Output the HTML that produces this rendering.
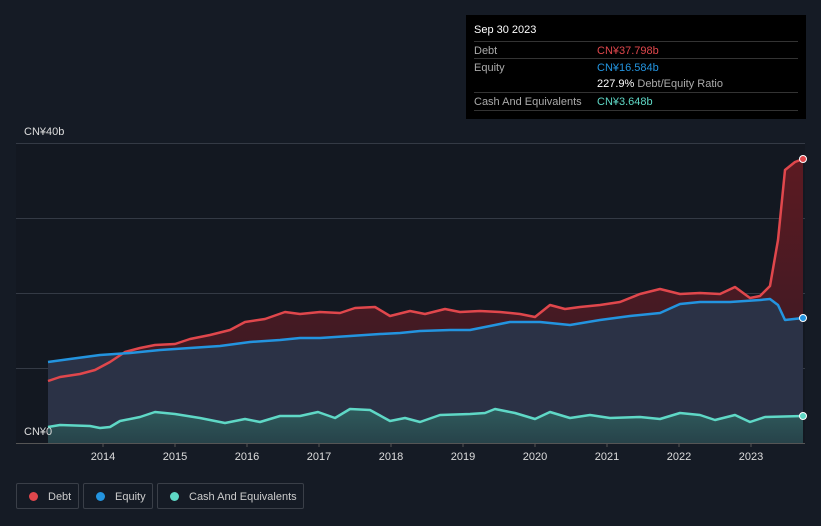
<!DOCTYPE html><html><head><style>
body{margin:0;width:821px;height:526px;background:#151b25;font-family:"Liberation Sans",sans-serif;overflow:hidden;position:relative}
.tt{position:absolute;left:466px;top:15px;width:340px;height:104px;background:#000;color:#fff;font-size:11px}
.row{position:absolute;left:8px;width:324px;height:17px;border-top:1px solid #333;}
.row span{position:absolute;top:3px}
.lg{position:absolute;top:483px;height:26px;border:1px solid #3a3f48;border-radius:2px;color:#ccc;font-size:11px;line-height:26px;box-sizing:border-box}
.lg i{display:inline-block;width:9px;height:9px;border-radius:50%;margin:0 10px 0 12px;vertical-align:-1px}
</style></head><body>
<svg width="821" height="526" style="position:absolute;left:0;top:0">
<defs>
<linearGradient id="rd" x1="0" y1="0" x2="0" y2="1"><stop offset="0" stop-color="#5c1a22"/><stop offset="1" stop-color="#321a24"/></linearGradient>
<linearGradient id="cs" x1="0" y1="0" x2="0" y2="1"><stop offset="0" stop-color="#2f5a5c"/><stop offset="1" stop-color="#27434a"/></linearGradient>
</defs>
<rect x="16" y="143" width="789" height="300" fill="#131821"/>
<g stroke="#343a45" stroke-width="1"><line x1="16" y1="143.5" x2="805" y2="143.5"/><line x1="16" y1="218.5" x2="805" y2="218.5"/><line x1="16" y1="293.5" x2="805" y2="293.5"/><line x1="16" y1="368.5" x2="805" y2="368.5"/><line x1="16" y1="443.5" x2="805" y2="443.5" stroke="#555"/></g>
<polygon fill="url(#rd)" points="48,443 48,381 60,377 80,374 95,370 110,362 125,352 140,348 155,345 175,344 190,339 210,335 230,330 245,322 265,319 285,312 300,314 320,312 340,313 355,308 375,307 390,316 410,311 425,314 445,309 460,312 480,311 500,312 520,314 535,317 550,305 565,309 580,307 600,305 620,302 640,294 660,289 680,294 700,293 720,294 735,287 750,298 760,296 770,286 778,240 785,170 795,162 803,159 803,443"/>
<polygon fill="#2b3246" points="48,443 48,362 70,359 100,355 130,353 160,350 190,348 220,346 250,342 280,340 300,338 320,338 350,336 380,334 400,333 420,331 450,330 470,330 490,326 510,322 540,322 570,325 600,320 630,316 660,313 680,304 700,302 730,302 760,300 770,299 778,305 785,320 803,318 803,443"/>
<polygon fill="url(#cs)" points="48,443 48,427 60,425 90,426 100,428 110,427 120,421 140,417 155,412 175,414 200,418 225,423 245,419 260,422 280,416 300,416 318,412 335,418 350,409 370,410 390,421 405,418 420,422 440,415 470,414 485,413 495,409 515,413 535,419 550,412 570,418 590,415 610,418 640,417 660,419 680,413 700,415 715,420 735,415 750,422 765,417 803,416 803,443"/>
<g fill="none" stroke-width="2.5" stroke-linejoin="round">
<polyline stroke="#e0474c" points="48,381 60,377 80,374 95,370 110,362 125,352 140,348 155,345 175,344 190,339 210,335 230,330 245,322 265,319 285,312 300,314 320,312 340,313 355,308 375,307 390,316 410,311 425,314 445,309 460,312 480,311 500,312 520,314 535,317 550,305 565,309 580,307 600,305 620,302 640,294 660,289 680,294 700,293 720,294 735,287 750,298 760,296 770,286 778,240 785,170 795,162 803,159"/>
<polyline stroke="#2394df" points="48,362 70,359 100,355 130,353 160,350 190,348 220,346 250,342 280,340 300,338 320,338 350,336 380,334 400,333 420,331 450,330 470,330 490,326 510,322 540,322 570,325 600,320 630,316 660,313 680,304 700,302 730,302 760,300 770,299 778,305 785,320 803,318"/>
<polyline stroke="#5fd8c6" points="48,427 60,425 90,426 100,428 110,427 120,421 140,417 155,412 175,414 200,418 225,423 245,419 260,422 280,416 300,416 318,412 335,418 350,409 370,410 390,421 405,418 420,422 440,415 470,414 485,413 495,409 515,413 535,419 550,412 570,418 590,415 610,418 640,417 660,419 680,413 700,415 715,420 735,415 750,422 765,417 803,416"/>
</g>
<circle cx="803" cy="159" r="3.5" fill="#e0474c" stroke="#fff" stroke-width="1"/>
<circle cx="803" cy="318" r="3.5" fill="#2394df" stroke="#fff" stroke-width="1"/>
<circle cx="803" cy="416" r="3.5" fill="#5fd8c6" stroke="#fff" stroke-width="1"/>
<g fill="#ddd" font-size="11" font-family="Liberation Sans">
<text x="24" y="135">CN¥40b</text><text x="24" y="435">CN¥0</text>
<g text-anchor="middle"><text x="103" y="460">2014</text><text x="175" y="460">2015</text><text x="247" y="460">2016</text><text x="319" y="460">2017</text><text x="391" y="460">2018</text><text x="463" y="460">2019</text><text x="535" y="460">2020</text><text x="607" y="460">2021</text><text x="679" y="460">2022</text><text x="751" y="460">2023</text></g>
</g>
<g stroke="#555"><line x1="103" y1="443" x2="103" y2="447"/><line x1="175" y1="443" x2="175" y2="447"/><line x1="247" y1="443" x2="247" y2="447"/><line x1="319" y1="443" x2="319" y2="447"/><line x1="391" y1="443" x2="391" y2="447"/><line x1="463" y1="443" x2="463" y2="447"/><line x1="535" y1="443" x2="535" y2="447"/><line x1="607" y1="443" x2="607" y2="447"/><line x1="679" y1="443" x2="679" y2="447"/><line x1="751" y1="443" x2="751" y2="447"/></g>
</svg>
<div class="tt">
<div style="position:absolute;left:8px;top:9px">Sep 30 2023</div>
<div class="row" style="top:26px"><span style="color:#aaa">Debt</span><span style="left:123px;color:#e0474c">CN¥37.798b</span></div>
<div class="row" style="top:43px"><span style="color:#aaa">Equity</span><span style="left:123px;color:#2394df">CN¥16.584b</span></div>
<div class="row" style="top:60px;border-top:none"><span style="left:123px">227.9% <span style="position:static;color:#aaa">Debt/Equity Ratio</span></span></div>
<div class="row" style="top:77px"><span style="color:#aaa">Cash And Equivalents</span><span style="left:123px;color:#5fd8c6">CN¥3.648b</span></div>
<div class="row" style="top:95px;height:0"></div>
</div>
<div class="lg" style="left:16px;width:63px"><i style="background:#e0474c"></i>Debt</div>
<div class="lg" style="left:83px;width:70px"><i style="background:#2394df"></i>Equity</div>
<div class="lg" style="left:157px;width:147px"><i style="background:#5fd8c6"></i>Cash And Equivalents</div>
</body></html>
